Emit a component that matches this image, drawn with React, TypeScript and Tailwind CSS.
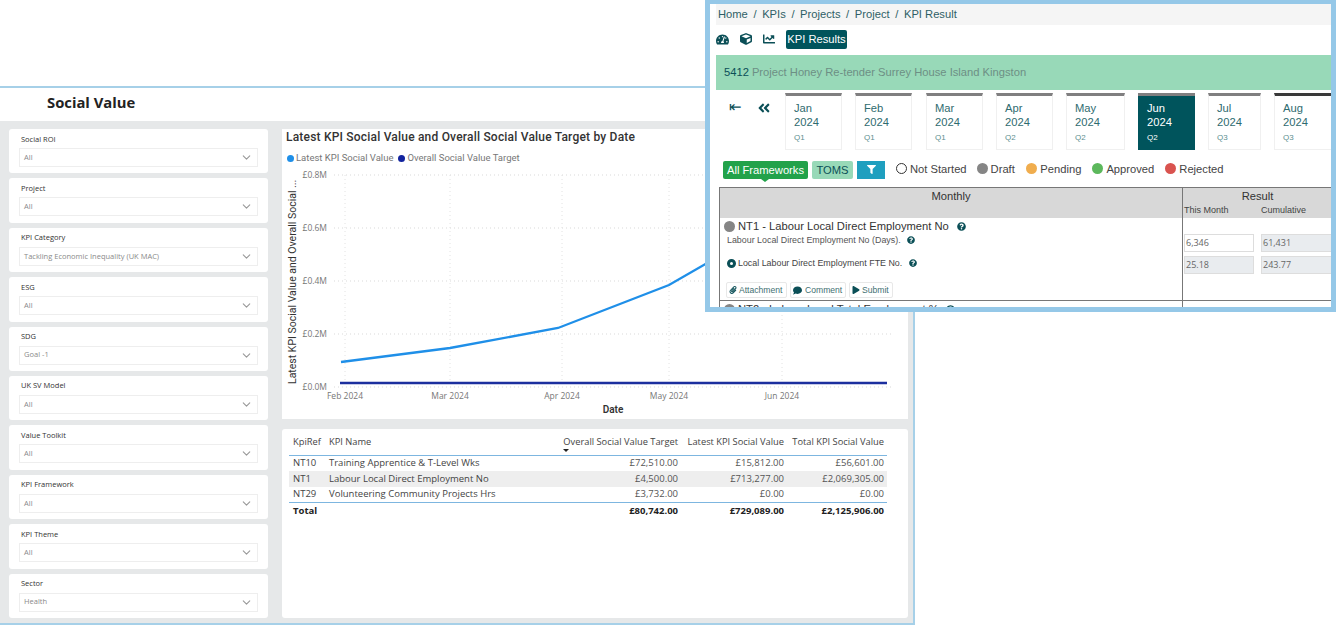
import {
  FaAngleDoubleLeft,
  FaChartLine,
  FaComment,
  FaCube,
  FaFilter,
  FaPaperclip,
  FaPlay,
  FaQuestionCircle,
  FaTachometerAlt,
} from "react-icons/fa";
import { FiChevronDown } from "react-icons/fi";

const slicers = [
  { label: "Social ROI", value: "All" },
  { label: "Project", value: "All" },
  { label: "KPI Category", value: "Tackling Economic Inequality (UK MAC)" },
  { label: "ESG", value: "All" },
  { label: "SDG", value: "Goal -1" },
  { label: "UK SV Model", value: "All" },
  { label: "Value Toolkit", value: "All" },
  { label: "KPI Framework", value: "All" },
  { label: "KPI Theme", value: "All" },
  { label: "Sector", value: "Health" },
];

const rows = [
  ["NT10", "Training Apprentice & T-Level Wks", "£72,510.00", "£15,812.00", "£56,601.00"],
  ["NT1", "Labour Local Direct Employment No", "£4,500.00", "£713,277.00", "£2,069,305.00"],
  ["NT29", "Volunteering Community Projects Hrs", "£3,732.00", "£0.00", "£0.00"],
];

const months = [
  { m: "Jan", q: "Q1", w: "w-[57px]", gap: "mr-[13px]" },
  { m: "Feb", q: "Q1", w: "w-[57px]", gap: "mr-[14px]" },
  { m: "Mar", q: "Q1", w: "w-[57px]", gap: "mr-[13px]" },
  { m: "Apr", q: "Q2", w: "w-[57px]", gap: "mr-[13px]" },
  { m: "May", q: "Q2", w: "w-[59px]", gap: "mr-[13px]" },
  { m: "Jun", q: "Q2", w: "w-[57px]", gap: "mr-[13px]", active: true },
  { m: "Jul", q: "Q3", w: "w-[53px]", gap: "mr-[13px]" },
  { m: "Aug", q: "Q3", w: "w-[60px]", gap: "", dark: true },
];

const statuses = [
  { label: "Not Started", dot: "bg-white border border-[#333333]", gap: "mr-[10px]" },
  { label: "Draft", dot: "bg-[#858585]", gap: "mr-[11.5px]" },
  { label: "Pending", dot: "bg-[#f0ad4e]", gap: "mr-[11px]" },
  { label: "Approved", dot: "bg-[#5cb85c]", gap: "mr-[11px]" },
  { label: "Rejected", dot: "bg-[#d9534f]", gap: "" },
];

const yTicks = [
  { label: "£0.8M", y: 10 },
  { label: "£0.6M", y: 63 },
  { label: "£0.4M", y: 116 },
  { label: "£0.2M", y: 169 },
  { label: "£0.0M", y: 222 },
];

const xTicks = [
  { label: "Feb 2024", x: 63 },
  { label: "Mar 2024", x: 168 },
  { label: "Apr 2024", x: 280 },
  { label: "May 2024", x: 387 },
  { label: "Jun 2024", x: 500 },
];

const Slicer = ({ label, value }: { label: string; value: string }) => (
  <div className="h-[44.4px] bg-white rounded-[3px] px-[10px] pt-[4.5px]">
    <p className="text-[7.5px] leading-[11px] font-medium text-[#333333] ml-[2px]">{label}</p>
    <div className="mt-[3.5px] h-[19px] border border-[#eeeeee] flex items-center justify-between pl-[4px] pr-[4px]">
      <span className="text-[7.5px] text-[#8a8a8a]">{value}</span>
      <FiChevronDown className="w-[13px] h-[13px] text-[#999999]" />
    </div>
  </div>
);

const Chart = () => (
  <svg viewBox="0 0 626 254" className="w-[626px] h-[254px] block">
    {yTicks.map((t) => (
      <g key={t.label}>
        <line x1="52" x2="610" y1={t.y} y2={t.y} stroke="#d9d9d9" strokeWidth="1" strokeDasharray="1 3" />
        <text x="45" y={t.y + 3} textAnchor="end" fontSize="8.5" fill="#777777" fontFamily="Open Sans, sans-serif">
          {t.label}
        </text>
      </g>
    ))}
    {xTicks.map((t) => (
      <g key={t.label}>
        <line x1={t.x} x2={t.x} y1="10" y2="222" stroke="#e2e2e2" strokeWidth="1" strokeDasharray="1 3" />
        <text x={t.x} y="234" textAnchor="middle" fontSize="8.5" fill="#777777" fontFamily="Open Sans, sans-serif">
          {t.label}
        </text>
      </g>
    ))}
    <polyline points="59,197 168,183 276,163 387,120 500,55" fill="none" stroke="#1f8fe8" strokeWidth="2.3" />
    <line x1="58" x2="605" y1="218" y2="218" stroke="#1c2f9e" strokeWidth="2.5" />
    <text x="331" y="248" textAnchor="middle" fontSize="10" fontWeight="600" fill="#333333" fontFamily="Roboto, sans-serif">
      Date
    </text>
    <text transform="translate(14 219) rotate(-90)" fontSize="10.5" fill="#333333" fontFamily="Roboto, sans-serif">
      Latest KPI Social Value and Overall Social ...
    </text>
  </svg>
);

const Help = ({ size }: { size: string }) => <FaQuestionCircle className={`${size} text-[#0b4f57]`} />;

const Overlay = () => (
  <div className="absolute left-[705px] top-0 w-[631px] h-[312px] bg-white border-[#95c8e8] border-t-4 border-b-[5px] border-x-[5px] overflow-hidden font-['Liberation_Sans',sans-serif]">
    <div className="ml-[6px] h-[21px] bg-[#f5f5f5] flex items-center pl-[2px] text-[11.2px] text-[#2f5f66] gap-[5.6px]">
      <span>Home</span>
      <span>/</span>
      <span>KPIs</span>
      <span>/</span>
      <span>Projects</span>
      <span>/</span>
      <span>Project</span>
      <span>/</span>
      <span>KPI Result</span>
    </div>
    <div className="ml-[6px] mt-[4px] h-[20px] flex items-center text-[#0b4f57]">
      <FaTachometerAlt className="w-[13px] h-[13px]" />
      <FaCube className="w-[12px] h-[12px] ml-[11px]" />
      <FaChartLine className="w-[12px] h-[12px] ml-[11px]" />
      <span className="ml-[11px] h-[19px] w-[61px] rounded-[2px] bg-[#00545c] text-white text-[11.2px] whitespace-nowrap flex items-center justify-center">
        KPI Results
      </span>
    </div>
    <div className="ml-[6px] mt-[6px] h-[35px] bg-[#98d9b8] flex items-center pl-[8px] pb-[1px] text-[11.2px]">
      <span className="text-[#0b4f57]">5412</span>
      <span className="ml-[3px] text-[#6d8f85]">Project Honey Re-tender Surrey House Island Kingston</span>
    </div>
    <div className="ml-[6px] mt-[3px] h-[57px] flex">
      <span className="w-[69px] shrink-0 flex pl-[13px] pt-[4px] text-[#0b4f57]">
        <span className="text-[15px] leading-[20px] font-['DejaVu_Sans',sans-serif]">⇤</span>
        <FaAngleDoubleLeft className="w-[14px] h-[14px] ml-[15px] mt-[4px]" />
      </span>
      {months.map((mo) => (
        <div
          key={mo.m}
          className={`${mo.w} ${mo.gap} shrink-0 h-[57px] border-t-[3px] ${mo.dark ? "border-t-[#3a3a3a]" : "border-t-[#807f80]"} ${
            mo.active ? "bg-[#00545c] text-white pl-[9px]" : "border-x border-b border-x-[#f0f0f0] border-b-[#f0f0f0] text-[#2f6b6f] pl-[8px]"
          } pt-[5px]`}
        >
          <p className="text-[11.2px] leading-[14px]">{mo.m}</p>
          <p className="text-[11.2px] leading-[14px]">2024</p>
          <p className={`text-[8px] leading-[10px] mt-[4px] ${mo.active ? "text-white" : "text-[#5c8f90]"}`}>{mo.q}</p>
        </div>
      ))}
    </div>
    <div className="ml-[13px] mt-[10px] h-[20px] flex items-center">
      <span className="relative h-[18px] w-[85px] rounded-[2px] bg-[#22a24a] text-white text-[11.2px] flex items-center justify-center">
        All Frameworks
        <span className="absolute left-[38px] top-[18px] w-0 h-0 border-x-[4px] border-x-transparent border-t-[3px] border-t-[#22a24a]" />
      </span>
      <span className="ml-[4px] h-[18px] w-[41px] rounded-[2px] bg-[#98d9b8] text-[#0b4f57] text-[11.2px] flex items-center justify-center">
        TOMS
      </span>
      <span className="ml-[4px] h-[18px] w-[28px] bg-[#1f9fbf] flex items-center justify-center pb-[2px]">
        <FaFilter className="w-[9px] h-[9px] text-white" />
      </span>
      <div className="ml-[11px] flex items-center text-[11.2px] text-[#444444] pb-[2px]">
        {statuses.map((s) => (
          <span key={s.label} className={`flex items-center gap-[2px] ${s.gap}`}>
            <span className={`w-[11px] h-[11px] rounded-full ${s.dot}`} />
            <span className="ml-[1px]">{s.label}</span>
          </span>
        ))}
      </div>
    </div>
    <div className="ml-[9px] mt-[7px] w-[620px] border-t border-l border-[#777777] grid grid-cols-[462px_1fr] text-[#333333]">
      <div className="h-[30px] bg-[#d8d8d8] text-[11.2px] leading-[14px] text-center pt-[1px]">Monthly</div>
      <div className="h-[30px] bg-[#d8d8d8] border-l border-[#777777] pl-[1px]">
        <p className="text-[11.2px] leading-[14px] text-center mt-[1px] w-[147px]">Result</p>
        <div className="flex text-[9px] leading-[11px] mt-[2px] text-[#444444]">
          <span className="w-[77px]">This Month</span>
          <span>Cumulative</span>
        </div>
      </div>
      <div className="h-[83px] border-b border-[#777777] pl-[4px] pt-[1px]">
        <div className="flex items-center text-[11.2px] leading-[15px]">
          <span className="w-[11px] h-[11px] rounded-full bg-[#858585] mr-[3px]" />
          NT1 - Labour Local Direct Employment No
          <span className="ml-[8px]">
            <Help size="w-[9px] h-[9px]" />
          </span>
        </div>
        <div className="flex items-center text-[8.9px] leading-[12px] ml-[3px] text-[#555555]">
          Labour Local Direct Employment No (Days).
          <span className="ml-[6px]">
            <Help size="w-[8px] h-[8px]" />
          </span>
        </div>
        <div className="flex items-center text-[8.9px] leading-[12px] mt-[11px] ml-[3px] text-[#444444]">
          <span className="w-[9px] h-[9px] rounded-full border-[3px] border-[#0b4f57] mr-[2px]" />
          Local Labour Direct Employment FTE No.
          <span className="ml-[7px]">
            <Help size="w-[8px] h-[8px]" />
          </span>
        </div>
        <div className="flex items-center text-[8.6px] text-[#3f6f72] mt-[13px] ml-[2px] gap-[3px]">
          <span className="h-[16px] w-[61px] pl-[2px] border border-[#e8e8e8] rounded-[2px] flex items-center gap-[2px]">
            <FaPaperclip className="w-[8px] h-[8px] text-[#0b4f57]" />
            Attachment
          </span>
          <span className="h-[16px] w-[56px] pl-[2px] border border-[#e8e8e8] rounded-[2px] flex items-center gap-[3px]">
            <FaComment className="w-[9px] h-[9px] text-[#0b4f57]" />
            Comment
          </span>
          <span className="h-[16px] w-[44px] pl-[2px] border border-[#e8e8e8] rounded-[2px] flex items-center gap-[2px]">
            <FaPlay className="w-[8px] h-[8px] text-[#0b4f57]" />
            Submit
          </span>
        </div>
      </div>
      <div className="h-[83px] border-l border-b border-[#777777] pl-[1px] pt-[16px] font-['Open_Sans',sans-serif] text-[9px] text-[#666666]">
        <div className="flex gap-[7px]">
          <span className="w-[70px] h-[18px] border border-[#dddddd] pl-[1px] flex items-center">6,346</span>
          <span className="w-[72px] h-[18px] border border-[#dddddd] bg-[#e9ecef] pl-[1px] flex items-center">61,431</span>
        </div>
        <div className="flex gap-[7px] mt-[4px]">
          <span className="w-[70px] h-[18px] border border-[#dddddd] bg-[#e9ecef] pl-[1px] flex items-center">25.18</span>
          <span className="w-[72px] h-[18px] border border-[#dddddd] bg-[#e9ecef] pl-[1px] flex items-center">243.77</span>
        </div>
      </div>
      <div className="h-[20px] pl-[4px] pt-[1px] flex items-start text-[11.2px] leading-[15px]">
        <span className="w-[11px] h-[11px] rounded-full bg-[#858585] mr-[3px] mt-[2px]" />
        NT2 - Labour Local Total Employment %
        <span className="ml-[7px] mt-[3px]">
          <Help size="w-[9px] h-[9px]" />
        </span>
      </div>
      <div className="h-[20px] border-l border-[#777777]" />
    </div>
  </div>
);

const App = () => {
  return (
    <div className="relative w-[1336px] h-[625px] overflow-hidden bg-white pt-[86px] font-['Open_Sans',sans-serif]">
      <div className="w-[915px] h-[539px] border-t-2 border-r-2 border-b-2 border-[#a6d0e8] flex flex-col">
        <div className="h-[33px] pl-[47px] pb-[4px] flex items-center text-[14.8px] font-bold text-[#222222]">Social Value</div>
        <div className="flex-1 bg-[#e6e8e9] flex pl-[9px] pt-[8px] gap-[14px]">
          <div className="w-[259px] flex flex-col gap-[5px]">
            {slicers.map((s) => (
              <Slicer key={s.label} label={s.label} value={s.value} />
            ))}
          </div>
          <div className="w-[626px] flex flex-col gap-[10px]">
            <div className="h-[290px] bg-white">
              <p className="h-[16px] pl-[4px] text-[12px] leading-[16px] tracking-[0.2px] font-medium text-[#333333] font-['Roboto',sans-serif]">
                Latest KPI Social Value and Overall Social Value Target by Date
              </p>
              <div className="mt-[7px] h-[13px] pl-[5px] flex items-center text-[9.5px] text-[#777777] font-['Roboto',sans-serif]">
                <span className="w-[7px] h-[7px] rounded-full bg-[#1f8fe8] mr-[2px]" />
                Latest KPI Social Value
                <span className="w-[7px] h-[7px] rounded-full bg-[#12239e] ml-[5px] mr-[2px]" />
                Overall Social Value Target
              </div>
              <Chart />
            </div>
            <div className="h-[189px] bg-white rounded-[3px] pt-[3px] pl-[7px] text-[9.5px] text-[#555555]">
              <div className="w-[598px] h-[23.5px] border-b border-[#7db6e0] grid grid-cols-[36px_1fr_120px_106px_100px] items-center pl-[4px] pr-[3px] pb-[3px] text-[9.3px] text-[#444444]">
                <span>KpiRef</span>
                <span>KPI Name</span>
                <span className="relative text-right whitespace-nowrap">
                  Overall Social Value Target
                  <span className="absolute left-[5px] top-[14px] w-0 h-0 border-x-[3px] border-x-transparent border-t-[3px] border-t-[#222222]" />
                </span>
                <span className="text-right whitespace-nowrap">Latest KPI Social Value</span>
                <span className="text-right whitespace-nowrap">Total KPI Social Value</span>
              </div>
              {rows.map((r, i) => (
                <div
                  key={r[0]}
                  className={`w-[598px] h-[15.6px] grid grid-cols-[36px_1fr_120px_106px_100px] items-center pl-[4px] pr-[3px] ${
                    i === 1 ? "bg-[#eeeeee]" : ""
                  }`}
                >
                  <span className="text-[#444444]">{r[0]}</span>
                  <span className="text-[#444444]">{r[1]}</span>
                  <span className="text-right">{r[2]}</span>
                  <span className="text-right">{r[3]}</span>
                  <span className="text-right">{r[4]}</span>
                </div>
              ))}
              <div className="w-[598px] h-[16px] border-t border-[#7db6e0] grid grid-cols-[36px_1fr_120px_106px_100px] items-center pl-[4px] pr-[3px] font-bold text-[#222222]">
                <span>Total</span>
                <span />
                <span className="text-right">£80,742.00</span>
                <span className="text-right">£729,089.00</span>
                <span className="text-right">£2,125,906.00</span>
              </div>
            </div>
          </div>
        </div>
      </div>
      <Overlay />
    </div>
  );
};

export default App;
